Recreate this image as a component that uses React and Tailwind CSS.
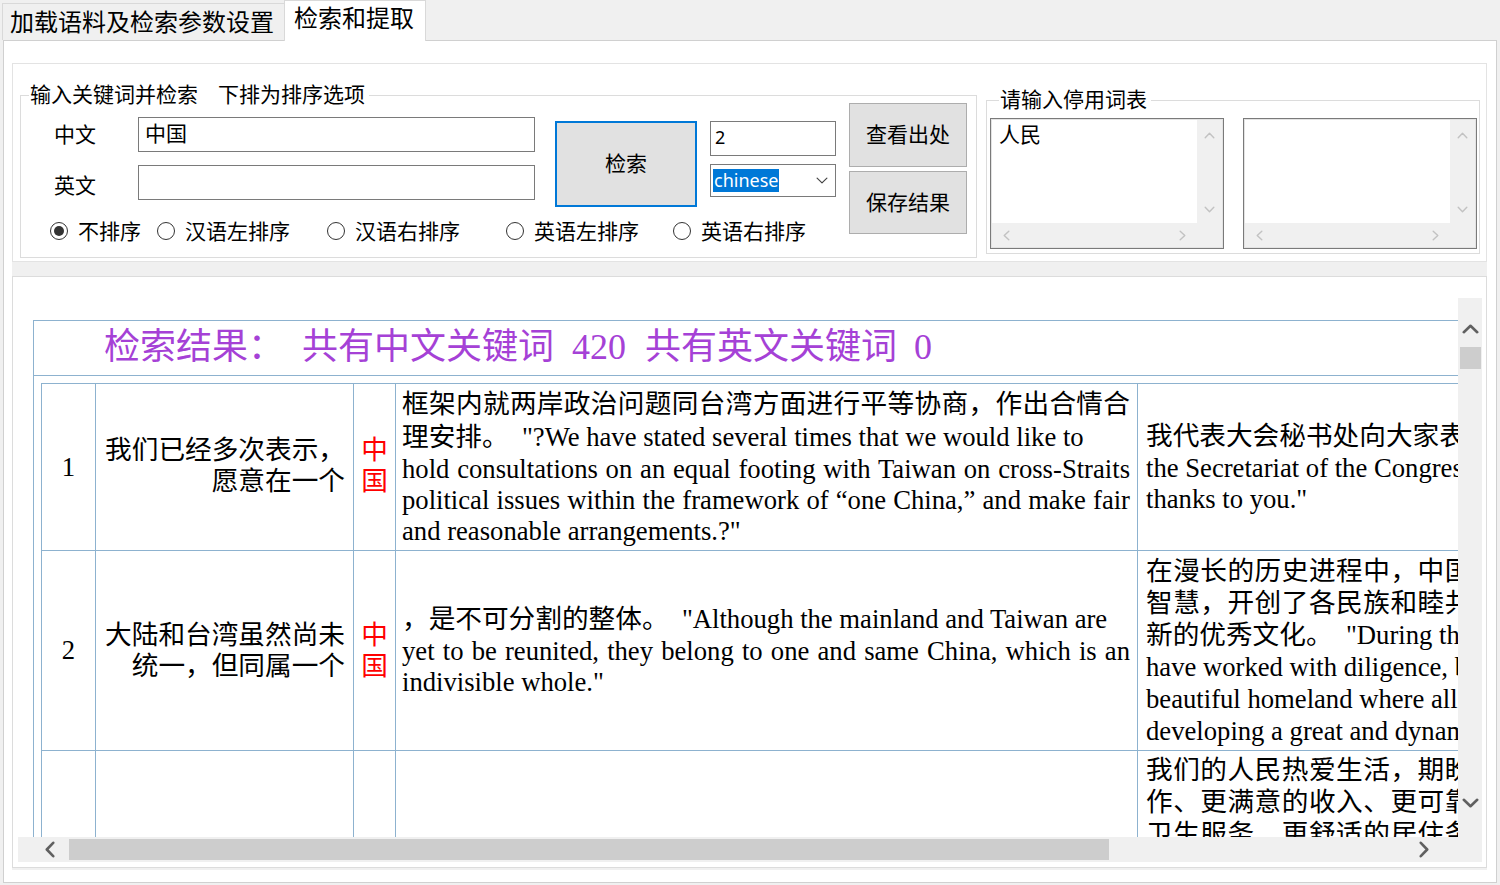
import React from "react";

const ui = "font-['Noto_Sans_CJK_SC','Noto_Sans',sans-serif]";
const web = "font-['Liberation_Serif','Noto_Sans_CJK_SC',serif]";
const line = "border-[#8db2cf]";

function Chevron({ dir, w, h, color, sw, className = "" }) {
  let pts;
  const p = sw / 2 + 0.5;
  if (dir === "up") pts = `${p},${h - p} ${w / 2},${p} ${w - p},${h - p}`;
  else if (dir === "down") pts = `${p},${p} ${w / 2},${h - p} ${w - p},${p}`;
  else if (dir === "left") pts = `${w - p},${p} ${p},${h / 2} ${w - p},${h - p}`;
  else pts = `${p},${p} ${w - p},${h / 2} ${p},${h - p}`;
  return (
    <svg width={w} height={h} viewBox={`0 0 ${w} ${h}`} className={className}>
      <polyline
        points={pts}
        fill="none"
        stroke={color}
        strokeWidth={sw}
        strokeLinecap="round"
        strokeLinejoin="round"
      />
    </svg>
  );
}

function Radio({ label, checked, className = "" }) {
  return (
    <div className={`flex items-center ${className}`}>
      <span className="flex h-[18px] w-[18px] items-center justify-center rounded-full border border-[#333] bg-white">
        {checked ? <span className="h-[10px] w-[10px] rounded-full bg-[#333]" /> : null}
      </span>
      <span className="ml-[10px] pb-[3px]">{label}</span>
    </div>
  );
}

function ListBox({ text }) {
  return (
    <div className="h-[131px] w-[234px] border border-[#7a7a7a] bg-white">
      <div className="grid h-full grid-cols-[1fr_25px] grid-rows-[1fr_24px] border border-[#e3e3e3]">
        <div className="pl-[7px] text-[21px] leading-[26px]">{text}</div>
        <div className="flex flex-col items-center justify-between bg-[#f0f0f0] pb-[10px] pt-[12px]">
          <Chevron dir="up" w={11} h={7} color="#c2c2c2" sw={1.4} />
          <Chevron dir="down" w={11} h={7} color="#c2c2c2" sw={1.4} />
        </div>
        <div className="flex items-center justify-between bg-[#f0f0f0] px-[11px]">
          <Chevron dir="left" w={7} h={11} color="#c2c2c2" sw={1.4} />
          <Chevron dir="right" w={7} h={11} color="#c2c2c2" sw={1.4} />
        </div>
        <div className="bg-[#f0f0f0]" />
      </div>
    </div>
  );
}

function Cell({ children, className = "" }) {
  return (
    <div className={`flex flex-col justify-center border-l border-t ${line} ${className}`}>
      {children}
    </div>
  );
}

function Just({ children, className = "" }) {
  return <div className={`[text-align-last:justify] ${className}`}>{children}</div>;
}

function Clip({ children, className = "" }) {
  return <div className={`whitespace-nowrap ${className}`}>{children}</div>;
}

function Results() {
  return (
    <div className={`w-[1600px] border ${line} ${web} text-black`}>
      <div className={`flex h-[55px] items-center whitespace-nowrap border-b ${line} pb-[2px] pl-[70px] text-[36px] text-[#a541d6]`}>
        <span>检索结果：</span>
        <span className="ml-[18px]">共有中文关键词</span>
        <span className="ml-[18px]">420</span>
        <span className="ml-[19px]">共有英文关键词</span>
        <span className="ml-[17px]">0</span>
      </div>
      <div className="pl-[7px] pt-[7px]">
        <div className="grid w-[1560px] grid-cols-[54px_258px_42px_742px_740px] grid-rows-[167px_200px_400px] text-[26.67px]">
          <Cell className="items-center leading-[31px]">1</Cell>
          <Cell className="pb-[3px] pr-[8px] text-right leading-[31px]">
            <div>我们已经多次表示，</div>
            <div>愿意在一个</div>
          </Cell>
          <Cell className="items-center pb-[3px] leading-[31px] text-[#ff0000]">
            <div>中</div>
            <div>国</div>
          </Cell>
          <Cell className="pl-[6px] pr-[7px]">
            <Just className="leading-[33px]">框架内就两岸政治问题同台湾方面进行平等协商，作出合情合</Just>
            <div className="whitespace-nowrap leading-[33px]">理安排。{"\u00a0 "}"?We have stated several times that we would like to</div>
            <Just className="leading-[31px]">hold consultations on an equal footing with Taiwan on cross-Straits</Just>
            <Just className="leading-[31px]">political issues within the framework of “one China,” and make fair</Just>
            <div className="leading-[31px]">and reasonable arrangements.?"</div>
          </Cell>
          <Cell className="pl-[8px]">
            <Clip className="leading-[33px]">我代表大会秘书处向大家表示衷心的感谢。 "On behalf of</Clip>
            <Clip className="leading-[31px]">the Secretariat of the Congress, I would like to extend our sincere</Clip>
            <Clip className="leading-[31px]">thanks to you."</Clip>
          </Cell>

          <Cell className="items-center leading-[31px]">2</Cell>
          <Cell className="pr-[8px] text-right leading-[31px]">
            <div>大陆和台湾虽然尚未</div>
            <div>统一，但同属一个</div>
          </Cell>
          <Cell className="items-center leading-[31px] text-[#ff0000]">
            <div>中</div>
            <div>国</div>
          </Cell>
          <Cell className="pl-[6px] pr-[7px]">
            <div className="whitespace-nowrap leading-[33px]">，是不可分割的整体。{"\u00a0 "}"Although the mainland and Taiwan are</div>
            <Just className="leading-[31px]">yet to be reunited, they belong to one and same China, which is an</Just>
            <div className="leading-[31px]">indivisible whole."</div>
          </Cell>
          <Cell className="pl-[8px] leading-[32px]">
            <Clip className="tracking-[0.5px]">在漫长的历史进程中，中国人民依靠自己的勤劳、勇敢和</Clip>
            <Clip className="tracking-[0.5px]">智慧，开创了各民族和睦共处的美好家园，培育了历久弥</Clip>
            <Clip>新的优秀文化。{"\u00a0 "}"During the long course of history, the Chinese</Clip>
            <Clip>have worked with diligence, bravery and wisdom to build a</Clip>
            <Clip>beautiful homeland where all ethnic groups live in harmony,</Clip>
            <Clip>developing a great and dynamic culture that is always fresh."</Clip>
          </Cell>

          <Cell className="items-center leading-[31px]">3</Cell>
          <Cell />
          <Cell />
          <Cell />
          <Cell className="justify-start pl-[8px] pt-[3px] leading-[32px]">
            <Clip className="tracking-[0.5px]">我们的人民热爱生活，期盼有更好的教育、更稳定的工</Clip>
            <Clip className="tracking-[0.5px]">作、更满意的收入、更可靠的社会保障、更高水平的医疗</Clip>
            <Clip className="tracking-[0.5px]">卫生服务、更舒适的居住条件、更优美的环境，期盼孩子们</Clip>
            <Clip className="tracking-[0.5px]">能成长得更好、工作得更好、生活得更好。</Clip>
          </Cell>
        </div>
      </div>
    </div>
  );
}

export default function App() {
  return (
    <div className={`h-[885px] w-[1500px] overflow-hidden bg-[#f0f0f0] text-black ${ui}`}>
      <div className="flex h-[40px] items-start pl-[2px]">
        <div className="mt-[3px] flex h-[37px] w-[282px] items-center border border-b-0 border-r-0 border-[#d9d9d9] bg-[#f0f0f0] pb-[3px] pl-[7px] text-[24px] leading-[32px]">
          加载语料及检索参数设置
        </div>
        <div className="relative z-10 h-[41px] w-[142px] border border-b-0 border-[#d9d9d9] bg-white pl-[9px] text-[24px] leading-[32px]">
          检索和提取
        </div>
      </div>

      <div className="ml-[3px] h-[843px] w-[1494px] border border-[#d0d0d0] bg-white pl-[8px] pt-[11px]">
        <div className="flex h-[818px] w-[1475px] flex-col bg-[#f0f0f0]">
          <div className="h-[210px] bg-white pt-[11px]">
            <div className="flex h-[199px] items-start border border-[#e3e3e3] text-[21px] leading-[28px]">
              <div className="relative ml-[7px] mt-[31px] flex h-[163px] w-[957px] items-start border border-[#dcdcdc]">
                <div className="absolute left-[8px] top-[-17px] flex bg-white pl-px pr-[4px]">
                  <span>输入关键词并检索</span>
                  <span className="ml-[20px]">下排为排序选项</span>
                </div>

                <div className="flex w-[815px] flex-col">
                  <div className="mt-[21px] flex items-start">
                    <div className="flex w-[514px] flex-col">
                      <div className="flex h-[35px] items-center">
                        <span className="w-[117px] pb-[4px] pl-[33px]">中文</span>
                        <div className="flex h-[35px] w-[397px] items-center border border-[#7a7a7a] bg-white pb-[5px] pl-[6px]">
                          中国
                        </div>
                      </div>
                      <div className="mt-[13px] flex h-[35px] items-center">
                        <span className="mt-[2px] w-[117px] pl-[33px]">英文</span>
                        <div className="h-[35px] w-[397px] border border-[#7a7a7a] bg-white" />
                      </div>
                    </div>
                    <button
                      type="button"
                      className="ml-[20px] mt-[4px] flex h-[86px] w-[142px] items-center justify-center border-2 border-[#0078d7] bg-[#e1e1e1] pb-[4px]"
                    >
                      检索
                    </button>
                    <div className="ml-[13px] mt-[4px] flex w-[126px] flex-col font-['Noto_Sans',sans-serif] text-[18px]">
                      <div className="flex h-[35px] items-center border border-[#7a7a7a] bg-white pb-[3px] pl-[4px]">
                        2
                      </div>
                      <div className="mt-[8px] flex h-[33px] items-center border border-[#7a7a7a] bg-white pl-[2px] pr-[7px]">
                        <span className="bg-[#0078d7] px-px leading-[23px] text-white">chinese</span>
                        <Chevron dir="down" w={12} h={7} color="#444" sw={1.2} className="ml-auto" />
                      </div>
                    </div>
                  </div>

                  <div className="mt-[11px] flex h-[26px] items-center pl-[29px]">
                    <Radio label="不排序" checked className="w-[107px]" />
                    <Radio label="汉语左排序" className="w-[170px]" />
                    <Radio label="汉语右排序" className="w-[179px]" />
                    <Radio label="英语左排序" className="w-[167px]" />
                    <Radio label="英语右排序" />
                  </div>
                </div>

                <div className="ml-[13px] mt-[7px] flex flex-col">
                  <button
                    type="button"
                    className="flex h-[64px] w-[118px] items-center justify-center border border-[#adadad] bg-[#e1e1e1] pb-[4px]"
                  >
                    查看出处
                  </button>
                  <button
                    type="button"
                    className="mt-[4px] flex h-[63px] w-[118px] items-center justify-center border border-[#adadad] bg-[#e1e1e1] pb-[4px]"
                  >
                    保存结果
                  </button>
                </div>
              </div>

              <div className="relative ml-[9px] mt-[36px] flex h-[154px] w-[494px] items-start border border-[#dcdcdc] pl-[3px] pt-[17px]">
                <div className="absolute left-[12px] top-[-17px] bg-white pl-px pr-[4px]">请输入停用词表</div>
                <ListBox text="人民" />
                <div className="ml-[19px]">
                  <ListBox text="" />
                </div>
              </div>
            </div>
          </div>

          <div className="h-[14px]" />

          <div className="h-[592px] border border-[#dcdcdc] bg-white pl-[5px] pt-[21px]">
            <div className="grid h-[564px] w-[1464px] grid-cols-[1440px_24px] grid-rows-[539px_25px]">
              <div className="overflow-hidden bg-white pl-[15px] pt-[22px]">
                <Results />
              </div>
              <div className="flex flex-col items-center bg-[#f0f0f0]">
                <Chevron dir="up" w={17} h={10} color="#606060" sw={2.6} className="mt-[26px]" />
                <div className="mt-[13px] h-[22px] w-[21px] bg-[#cdcdcd]" />
                <Chevron dir="down" w={17} h={10} color="#606060" sw={2.6} className="mb-[29px] mt-auto" />
              </div>
              <div className="flex items-center bg-[#f0f0f0]">
                <Chevron dir="left" w={10} h={17} color="#606060" sw={2.6} className="ml-[27px]" />
                <div className="ml-[14px] h-[21px] w-[1040px] bg-[#cdcdcd]" />
                <Chevron dir="right" w={10} h={17} color="#606060" sw={2.6} className="ml-auto mr-[29px]" />
              </div>
              <div className="bg-[#f0f0f0]" />
            </div>
          </div>
        </div>
      </div>
    </div>
  );
}
